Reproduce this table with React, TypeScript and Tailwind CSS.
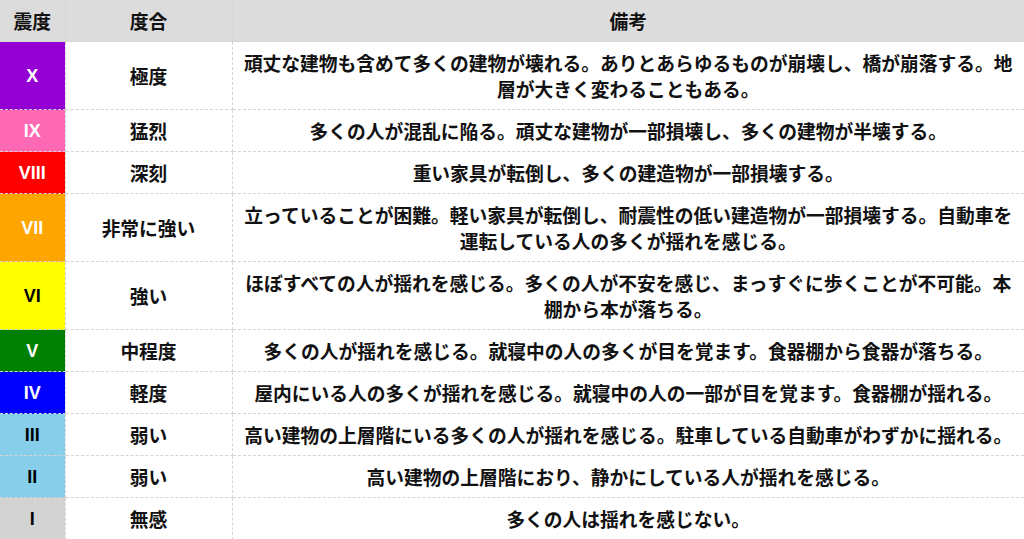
import React from 'react';

const rows = [
  { level: 'X', bg: 'bg-[#9400d3]', fg: 'text-white', degree: '極度', note: '頑丈な建物も含めて多くの建物が壊れる。ありとあらゆるものが崩壊し、橋が崩落する。地層が大きく変わることもある。' },
  { level: 'IX', bg: 'bg-[#ff69b4]', fg: 'text-white', degree: '猛烈', note: '多くの人が混乱に陥る。頑丈な建物が一部損壊し、多くの建物が半壊する。' },
  { level: 'VIII', bg: 'bg-[#ff0000]', fg: 'text-white', degree: '深刻', note: '重い家具が転倒し、多くの建造物が一部損壊する。' },
  { level: 'VII', bg: 'bg-[#ffa500]', fg: 'text-white', degree: '非常に強い', note: '立っていることが困難。軽い家具が転倒し、耐震性の低い建造物が一部損壊する。自動車を運転している人の多くが揺れを感じる。' },
  { level: 'VI', bg: 'bg-[#ffff00]', fg: 'text-black', degree: '強い', note: 'ほぼすべての人が揺れを感じる。多くの人が不安を感じ、まっすぐに歩くことが不可能。本棚から本が落ちる。' },
  { level: 'V', bg: 'bg-[#008000]', fg: 'text-white', degree: '中程度', note: '多くの人が揺れを感じる。就寝中の人の多くが目を覚ます。食器棚から食器が落ちる。' },
  { level: 'IV', bg: 'bg-[#0000ff]', fg: 'text-white', degree: '軽度', note: '屋内にいる人の多くが揺れを感じる。就寝中の人の一部が目を覚ます。食器棚が揺れる。' },
  { level: 'III', bg: 'bg-[#87ceeb]', fg: 'text-black', degree: '弱い', note: '高い建物の上層階にいる多くの人が揺れを感じる。駐車している自動車がわずかに揺れる。' },
  { level: 'II', bg: 'bg-[#87ceeb]', fg: 'text-black', degree: '弱い', note: '高い建物の上層階におり、静かにしている人が揺れを感じる。' },
  { level: 'I', bg: 'bg-[#d3d3d3]', fg: 'text-black', degree: '無感', note: '多くの人は揺れを感じない。' },
];

const cell = 'border border-dashed border-[#d4d4d4] pt-[8px] pb-[7px] px-[10px] text-center align-middle';

export default function App() {
  return (
    <div className="w-[1024px] bg-white font-['Noto_Sans_CJK_JP',sans-serif] font-bold text-[#111] text-[18.75px] leading-[26px]">
      <table className="w-full border-collapse table-fixed">
        <colgroup>
          <col className="w-[65px]" />
          <col className="w-[167px]" />
          <col />
        </colgroup>
        <thead>
          <tr className="bg-[#dcdcdc]">
            <th className={cell + ' border-t-0 border-l-0'}>震度</th>
            <th className={cell + ' border-t-0'}>度合</th>
            <th className={cell + ' border-t-0 border-r-0'}>備考</th>
          </tr>
        </thead>
        <tbody>
          {rows.map((r) => (
            <tr key={r.level}>
              <td className={`${cell} border-l-0 px-[4px] ${r.bg} ${r.fg} font-['Liberation_Sans',sans-serif] text-[18px]`}>
                {r.level}
              </td>
              <td className={cell}>{r.degree}</td>
              <td className={cell + ' border-r-0'}>{r.note}</td>
            </tr>
          ))}
        </tbody>
      </table>
    </div>
  );
}
